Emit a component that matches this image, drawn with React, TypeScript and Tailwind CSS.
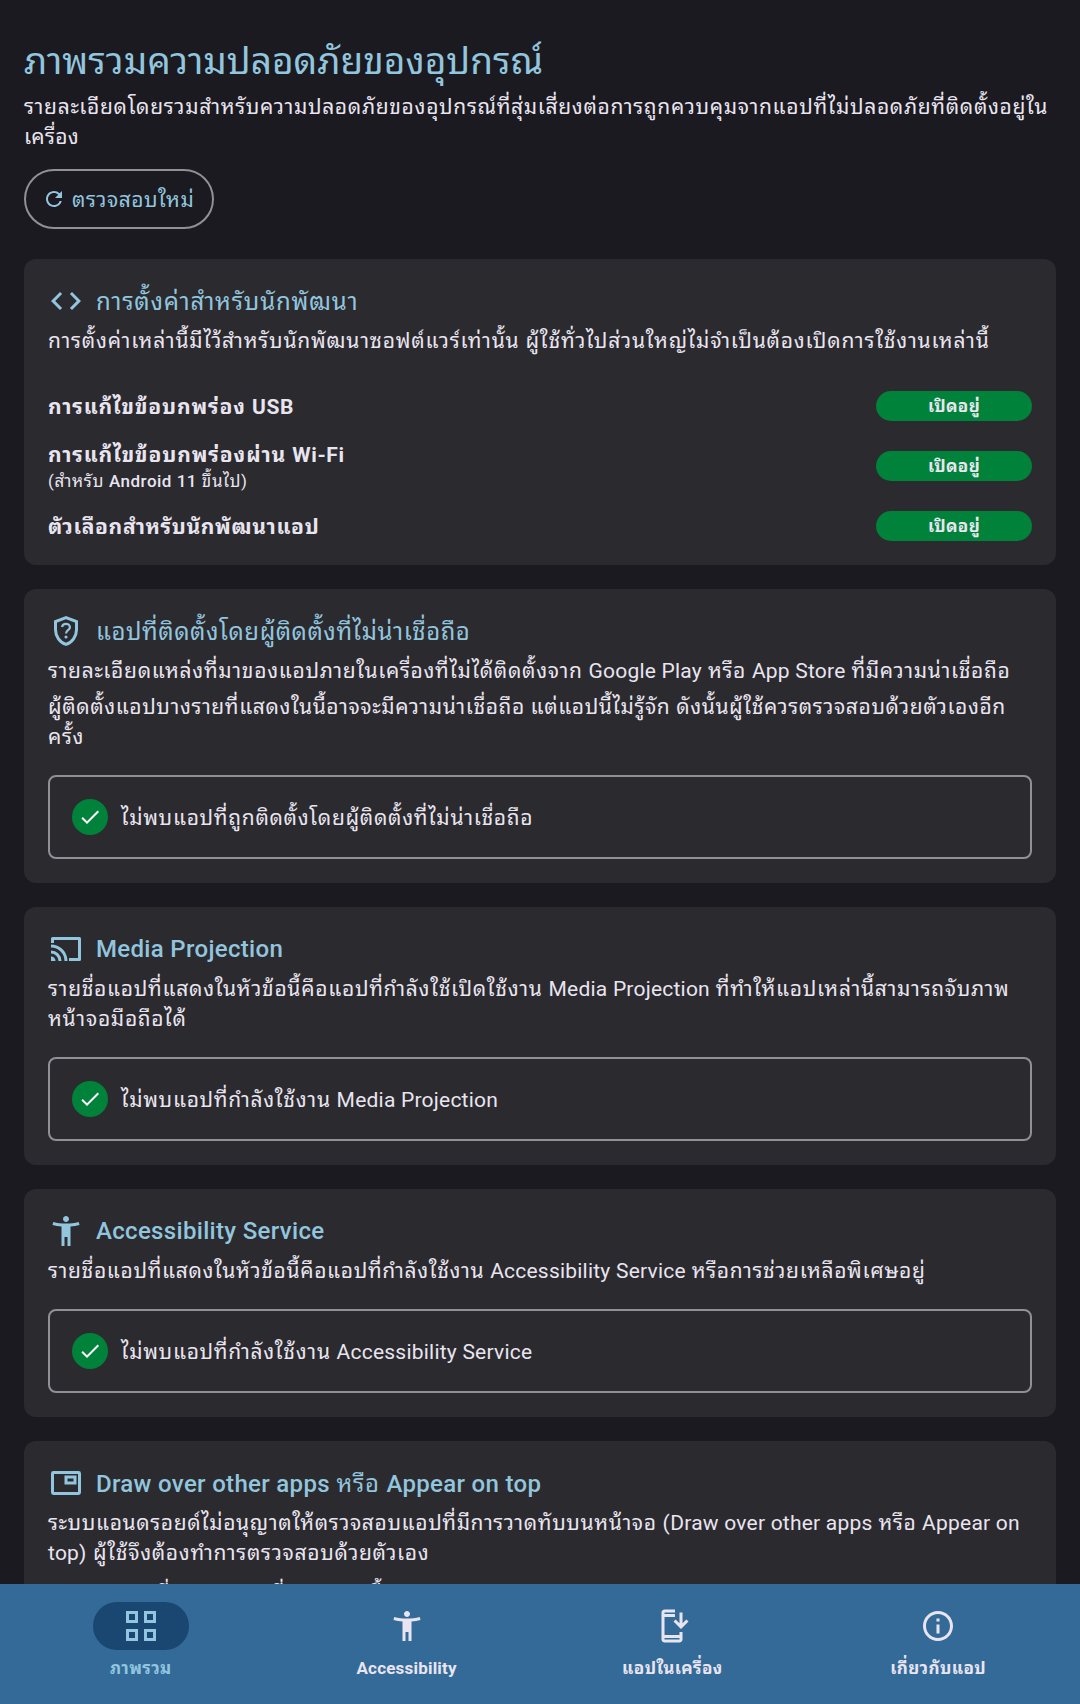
import type { ReactNode } from "react";
import { MdRefresh, MdCode, MdAccessibilityNew, MdOutlineInfo, MdCheck } from "react-icons/md";

function ShieldQuestionIcon() {
  return (
    <svg viewBox="0 0 24 24" className="size-9" fill="none" stroke="currentColor">
      <path d="M12 3.07 5 5.69V11.1c0 4.43 2.9 8.5 7 9.83 4.1-1.33 7-5.4 7-9.83V5.69z" strokeWidth="2" />
      <path d="M9.3 9.4c.3-1.4 1.3-2.2 2.7-2.2 1.5 0 2.6 1 2.6 2.3 0 1.9-2.6 2.1-2.6 4.2" strokeWidth="1.5" />
      <circle cx="12" cy="16" r="1.05" fill="currentColor" stroke="none" />
    </svg>
  );
}

function CastIcon() {
  return (
    <svg viewBox="0 0 24 24" className="size-9" fill="none" stroke="currentColor" strokeWidth="2">
      <path d="M3 8V5h18v14h-7" strokeLinejoin="round" />
      <path d="M2 9a11 11 0 0 1 11 11h-2A9 9 0 0 0 2 11zM2 13a7 7 0 0 1 7 7H7a5 5 0 0 0-5-5zM2 17a3 3 0 0 1 3 3H2z" fill="currentColor" stroke="none" />
    </svg>
  );
}

function PictureInPictureIcon() {
  return (
    <svg viewBox="0 0 24 24" className="size-9" fill="none" stroke="currentColor" strokeWidth="2">
      <rect x="3" y="5" width="18" height="14" rx="0.6" />
      <rect x="12" y="8" width="6" height="4" />
    </svg>
  );
}

function GridIcon() {
  return (
    <svg viewBox="0 0 24 24" className="size-9" fill="none" stroke="currentColor" strokeWidth="2">
      <path d="M3 3h6v6H3zM15 3h6v6h-6zM3 15h6v6H3zM15 15h6v6h-6z" />
    </svg>
  );
}

function InstallIcon() {
  return (
    <svg viewBox="0 0 24 24" className="size-9" fill="currentColor">
      <path d="M17 18H7V6h7V1H7c-1.1 0-2 .9-2 2v18c0 1.1.9 2 2 2h10c1.1 0 2-.9 2-2v-5h-2v2zm0 3H7v-1h10v1zM7 3h7v1H7V3z" fillRule="evenodd" />
      <path d="m18 14 5-5-1.41-1.41L19 10.17V3h-2v7.17l-2.59-2.58L13 9z" />
    </svg>
  );
}

/* Latin runs keep their own, tighter tracking; Thai runs inherit it from the parent. */
function Mixed({ text, latin = "tracking-[0.22px]" }: { text: string; latin?: string }) {
  return (
    <>
      {text.split(/([A-Za-z][A-Za-z0-9 -]*[A-Za-z0-9])/).map((run, i) =>
        i % 2 === 1 ? (
          <span key={i} className={latin}>
            {run}
          </span>
        ) : (
          run
        ),
      )}
    </>
  );
}

function Card({ icon, title, titleClass = "", children }: { icon: ReactNode; title: string; titleClass?: string; children: ReactNode }) {
  return (
    <section className="shrink-0 rounded-xl bg-[#2b2a2f] p-6">
      <h2 className="mb-1.5 flex h-9 items-center gap-3 text-[24px] text-[#92c5de]">
        {icon}
        <span className={`whitespace-nowrap ${titleClass}`}>
          <Mixed text={title} latin="font-medium tracking-[0.32px]" />
        </span>
      </h2>
      {children}
    </section>
  );
}

function SafeBox({ text }: { text: string }) {
  return (
    <div className="mt-6 flex h-[84px] items-center gap-3 rounded-lg border-2 border-[#919097] px-[22px]">
      <span className="flex size-9 items-center justify-center rounded-full bg-[#00823b] text-white">
        <MdCheck className="size-6" />
      </span>
      <span className="translate-y-px pl-px">
        <Mixed text={text} />
      </span>
    </div>
  );
}

function SettingRow({ label, labelClass, note }: { label: string; labelClass: string; note?: string }) {
  return (
    <div className="flex items-center justify-between">
      <div>
        <div className={`text-[21px] leading-[30px] font-bold ${labelClass}`}>
          <Mixed text={label} latin="tracking-[0.6px]" />
        </div>
        {note && (
          <div className="text-[17px] leading-5 tracking-[0.62px]">
            <Mixed text={note} latin="font-medium tracking-[0.5px]" />
          </div>
        )}
      </div>
      <span className="flex h-[30px] w-39 items-center justify-center rounded-full bg-[#00823b] text-[17px] font-bold tracking-[0.4px]">เปิดอยู่</span>
    </div>
  );
}

function NavItem({ icon, label, active }: { icon: ReactNode; label: string; active?: boolean }) {
  return (
    <div className={active ? "flex flex-1 flex-col items-center text-[#92c5de]" : "flex flex-1 flex-col items-center text-[#e9e5f0]"}>
      <div className={active ? "flex h-12 w-24 items-center justify-center rounded-full bg-[#1a4672]" : "flex h-12 w-24 items-center justify-center"}>{icon}</div>
      <span className="mt-1.5 text-[17px] leading-6 font-bold tracking-[0.4px]">
        <Mixed text={label} latin="tracking-[0.2px]" />
      </span>
    </div>
  );
}

export default function App() {
  return (
    <div className="flex h-[1704px] w-[1080px] flex-col overflow-hidden bg-[#1b1a20] font-['Roboto','Noto_Sans_Thai_Looped','Noto_Sans_Thai',sans-serif] text-[21px] leading-[30px] tracking-[0.7px] text-[#e9e5f0]">
      <main className="flex min-h-0 flex-1 flex-col gap-6 overflow-hidden px-6 pt-9">
        <header className="flex shrink-0 flex-col items-start pb-1.5">
          <h1 className="pt-0.5 text-[37px] leading-[48px] tracking-[0.02px] whitespace-nowrap text-[#92c5de]">ภาพรวมความปลอดภัยของอุปกรณ์</h1>
          <p className="mt-1.5 tracking-[0.67px] whitespace-nowrap">
            รายละเอียดโดยรวมสำหรับความปลอดภัยของอุปกรณ์ที่สุ่มเสี่ยงต่อการถูกควบคุมจากแอปที่ไม่ปลอดภัยที่ติดตั้งอยู่ใน
            <br />
            <span className="tracking-[0.3px]">เครื่อง</span>
          </p>
          <button className="mt-[17px] flex h-[60px] w-[190px] items-center gap-1.5 rounded-full border-2 border-[#919097] pl-4 tracking-[0.5px] whitespace-nowrap text-[#92c5de]">
            <MdRefresh className="size-6" />
            <span className="translate-y-px">ตรวจสอบใหม่</span>
          </button>
        </header>

        <Card icon={<MdCode className="size-9" />} title="การตั้งค่าสำหรับนักพัฒนา" titleClass="translate-y-px tracking-[0.8px]">
          <p className="translate-y-px tracking-[0.78px] whitespace-nowrap">การตั้งค่าเหล่านี้มีไว้สำหรับนักพัฒนาซอฟต์แวร์เท่านั้น ผู้ใช้ทั่วไปส่วนใหญ่ไม่จำเป็นต้องเปิดการใช้งานเหล่านี้</p>
          <div className="mt-9 flex flex-col gap-5">
            <SettingRow label="การแก้ไขข้อบกพร่อง USB" labelClass="translate-y-px tracking-[0.88px]" />
            <SettingRow label="การแก้ไขข้อบกพร่องผ่าน Wi-Fi" labelClass="-translate-y-px tracking-[0.9px]" note="(สำหรับ Android 11 ขึ้นไป)" />
            <SettingRow label="ตัวเลือกสำหรับนักพัฒนาแอป" labelClass="translate-y-px tracking-[0.65px]" />
          </div>
        </Card>

        <Card icon={<ShieldQuestionIcon />} title="แอปที่ติดตั้งโดยผู้ติดตั้งที่ไม่น่าเชื่อถือ" titleClass="translate-y-px tracking-[0.55px]">
          <p className="translate-y-px tracking-[0.68px] whitespace-nowrap">
            <Mixed text="รายละเอียดแหล่งที่มาของแอปภายในเครื่องที่ไม่ได้ติดตั้งจาก Google Play หรือ App Store ที่มีความน่าเชื่อถือ" />
          </p>
          <p className="mt-1.5 translate-y-px tracking-[0.59px] whitespace-nowrap">
            ผู้ติดตั้งแอปบางรายที่แสดงในนี้อาจจะมีความน่าเชื่อถือ แต่แอปนี้ไม่รู้จัก ดังนั้นผู้ใช้ควรตรวจสอบด้วยตัวเองอีก
            <br />
            ครั้ง
          </p>
          <SafeBox text="ไม่พบแอปที่ถูกติดตั้งโดยผู้ติดตั้งที่ไม่น่าเชื่อถือ" />
        </Card>

        <Card icon={<CastIcon />} title="Media Projection">
          <p className="translate-y-px whitespace-nowrap">
            <Mixed text="รายชื่อแอปที่แสดงในหัวข้อนี้คือแอปที่กำลังใช้เปิดใช้งาน Media Projection ที่ทำให้แอปเหล่านี้สามารถจับภาพ" />
            <br />
            หน้าจอมือถือได้
          </p>
          <SafeBox text="ไม่พบแอปที่กำลังใช้งาน Media Projection" />
        </Card>

        <Card icon={<MdAccessibilityNew className="size-9" />} title="Accessibility Service">
          <p className="translate-y-px tracking-[0.65px] whitespace-nowrap">
            <Mixed text="รายชื่อแอปที่แสดงในหัวข้อนี้คือแอปที่กำลังใช้งาน Accessibility Service หรือการช่วยเหลือพิเศษอยู่" />
          </p>
          <SafeBox text="ไม่พบแอปที่กำลังใช้งาน Accessibility Service" />
        </Card>

        <Card icon={<PictureInPictureIcon />} title="Draw over other apps หรือ Appear on top" titleClass="translate-y-px">
          <p className="translate-y-px whitespace-nowrap">
            <span className="tracking-[0.61px]">
              <Mixed text="ระบบแอนดรอยด์ไม่อนุญาตให้ตรวจสอบแอปที่มีการวาดทับบนหน้าจอ (Draw over other apps หรือ Appear on" />
            </span>
            <br />
            <Mixed text="top) ผู้ใช้จึงต้องทำการตรวจสอบด้วยตัวเอง" />
          </p>
          <p className="mt-3 tracking-[-0.1px] whitespace-nowrap">กดตรวจสอบที่รายการแอปที่ปรากฏบนนี้</p>
        </Card>
      </main>

      <nav className="flex h-[120px] shrink-0 bg-[#346a98] pt-[18px] pr-[9px] pl-2">
        <NavItem active icon={<GridIcon />} label="ภาพรวม" />
        <NavItem icon={<MdAccessibilityNew className="size-9" />} label="Accessibility" />
        <NavItem icon={<InstallIcon />} label="แอปในเครื่อง" />
        <NavItem icon={<MdOutlineInfo className="size-9" />} label="เกี่ยวกับแอป" />
      </nav>
    </div>
  );
}
